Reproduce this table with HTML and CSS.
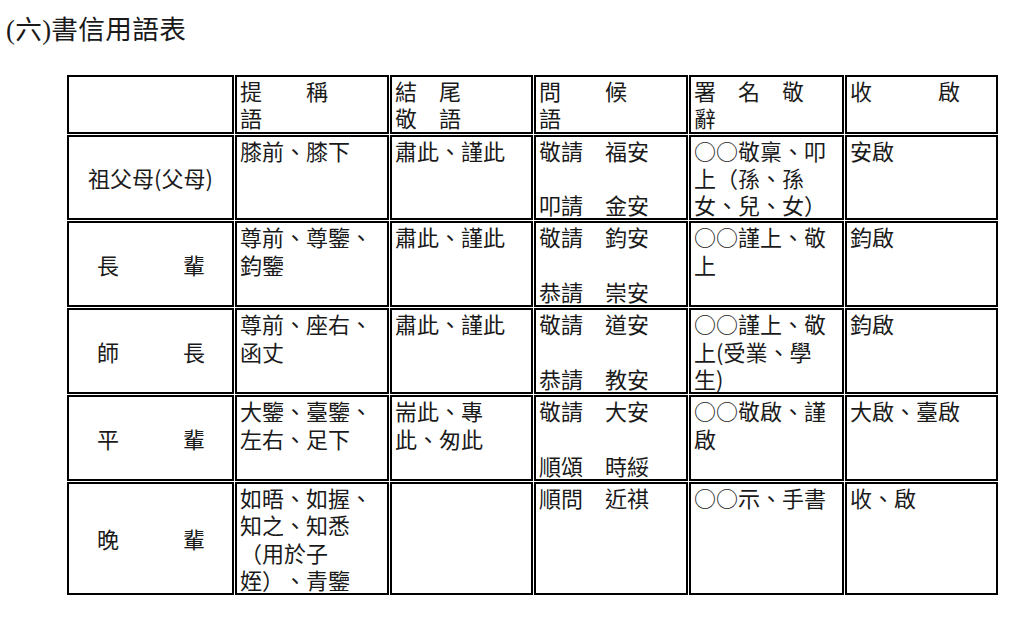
FILE: index.html
```html
<!DOCTYPE html>
<html lang="zh-Hant">
<head>
<meta charset="utf-8">
<link rel="stylesheet" href="styles.css">
</head>
<body>
<div class="title">(六)書信用語表</div>
<table class="letters">
  <tr class="head">
    <td class="c1"></td>
    <td class="c2">提&#12288;&#12288;稱<br>語</td>
    <td class="c3">結&#12288;尾<br>敬&#12288;語</td>
    <td class="c4">問&#12288;&#12288;候<br>語</td>
    <td class="c5">署&#12288;名&#12288;敬<br>辭</td>
    <td class="c6">收&#12288;&#12288;&#12288;啟</td>
  </tr>
  <tr>
    <td class="who">祖父母(父母)</td>
    <td>膝前、膝下</td>
    <td>肅此、謹此</td>
    <td>敬請&#12288;福安<br><br>叩請&#12288;金安</td>
    <td>○○敬稟、叩<br>上（孫、孫<br>女、兒、女）</td>
    <td>安啟</td>
  </tr>
  <tr>
    <td class="who"><div class="spread"><span>長</span><span>輩</span></div></td>
    <td>尊前、尊鑒、<br>鈞鑒</td>
    <td>肅此、謹此</td>
    <td>敬請&#12288;鈞安<br><br>恭請&#12288;崇安</td>
    <td>○○謹上、敬<br>上</td>
    <td>鈞啟</td>
  </tr>
  <tr>
    <td class="who"><div class="spread"><span>師</span><span>長</span></div></td>
    <td>尊前、座右、<br>函丈</td>
    <td>肅此、謹此</td>
    <td>敬請&#12288;道安<br><br>恭請&#12288;教安</td>
    <td>○○謹上、敬<br>上(受業、學<br>生)</td>
    <td>鈞啟</td>
  </tr>
  <tr>
    <td class="who"><div class="spread"><span>平</span><span>輩</span></div></td>
    <td>大鑒、臺鑒、<br>左右、足下</td>
    <td>耑此、專<br>此、匆此</td>
    <td>敬請&#12288;大安<br><br>順頌&#12288;時綏</td>
    <td>○○敬啟、謹<br>啟</td>
    <td>大啟、臺啟</td>
  </tr>
  <tr>
    <td class="who"><div class="spread"><span>晚</span><span>輩</span></div></td>
    <td>如晤、如握、<br>知之、知悉<br>（用於子<br>姪）、青鑒</td>
    <td></td>
    <td>順問&#12288;近祺</td>
    <td>○○示、手書</td>
    <td>收、啟</td>
  </tr>
</table>
</body>
</html>
```

FILE: styles.css
```css
html, body {
  margin: 0;
  padding: 0;
  background: #fff;
}

body {
  color: #1a1a1a;
  font-family: "Noto Sans CJK TC", sans-serif;
  text-spacing-trim: space-all;
}

.title {
  margin: 13px 0 27px 6px;
  font-family: "Liberation Serif", "Noto Sans CJK TC", serif;
  font-size: 26.67px;
  line-height: 34px;
  white-space: nowrap;
  letter-spacing: 0.3px;
}

.letters {
  margin-left: 66px;
  table-layout: fixed;
  width: 932px;
  border-collapse: separate;
  border-spacing: 1px;
  font-size: 22px;
  line-height: 27.3px;
}

.letters td {
  box-sizing: border-box;
  border: 2px solid #000;
  padding: 0 2px 0 3px;
  vertical-align: top;
  white-space: nowrap;
  overflow: hidden;
}

.letters .c1 { width: 167px; }
.letters .c2 { width: 154px; }
.letters .c3 { width: 143px; }
.letters .c4 { width: 154px; }
.letters .c5 { width: 155px; }
.letters .c6 { width: 153px; }

.letters td.who {
  vertical-align: middle;
  text-align: center;
  padding: 0;
}

.spread {
  display: flex;
  justify-content: space-between;
  padding: 0 27px 0 28px;
}
```
